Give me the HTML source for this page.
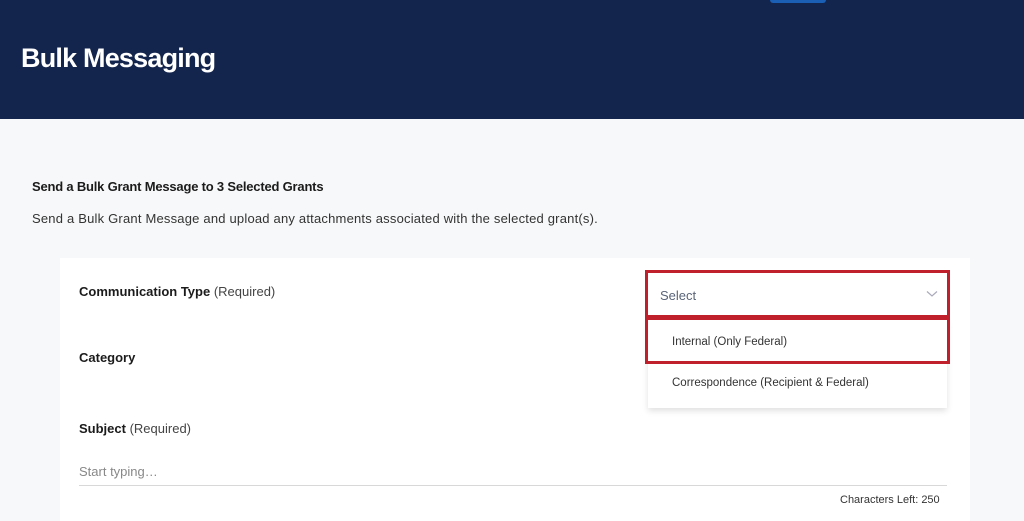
<!DOCTYPE html>
<html><head><style>
*{margin:0;padding:0;box-sizing:border-box}
body{width:1024px;height:521px;overflow:hidden;background:#f7f8f9;font-family:"Liberation Sans",sans-serif;position:relative;color:#1b1b1b}
.hdr{position:absolute;left:0;top:0;width:1024px;height:119px;background:#13244d}
.hdr h1{position:absolute;left:21px;top:43px;color:#fff;font-size:27px;font-weight:bold;letter-spacing:-0.8px}
.pill{position:absolute;left:770px;top:0;width:56px;height:3px;background:#1a5fb4;border-radius:0 0 4px 4px}
.card{position:absolute;left:60px;top:258px;width:910px;height:263px;background:#fff}
.t{position:absolute;font-size:13px;white-space:nowrap}
b{font-weight:bold}
.req{color:#444}
.sel{position:absolute;left:645px;top:270px;width:305px;height:48px;border:3px solid #c0202b;background:#fff}
.dd{position:absolute;left:648px;top:318px;width:299px;height:90px;background:#fff;box-shadow:0 3px 6px rgba(0,0,0,0.12)}
.opt1{position:absolute;left:645px;top:317px;width:305px;height:47px;border:3px solid #c0202b}
</style></head><body>
<div class="hdr"><h1>Bulk Messaging</h1><div class="pill"></div></div>
<div class="t" style="left:32px;top:179px;letter-spacing:-0.2px"><b>Send a Bulk Grant Message to 3 Selected Grants</b></div>
<div class="t" style="left:32px;top:211px;color:#333;letter-spacing:0.2px">Send a Bulk Grant Message and upload any attachments associated with the selected grant(s).</div>
<div class="card"></div>
<div class="t" style="left:79px;top:284px"><b>Communication Type</b> <span class="req">(Required)</span></div>
<div class="t" style="left:79px;top:350px"><b>Category</b></div>
<div class="t" style="left:79px;top:421px"><b>Subject</b> <span class="req">(Required)</span></div>
<div class="t" style="left:79px;top:464px;color:#888">Start typing…</div>
<div style="position:absolute;left:79px;top:485px;width:868px;height:1px;background:#d8d8d8"></div>
<div class="t" style="left:840px;top:494px;font-size:11px;color:#333">Characters Left: 250</div>
<div class="sel"><span class="t" style="left:12px;top:15px;color:#5a6478">Select</span>
<svg style="position:absolute;right:9px;top:17px" width="12" height="8" viewBox="0 0 12 8"><path d="M1 1.5L6 6L11 1.5" fill="none" stroke="#aab" stroke-width="1.2"/></svg></div>
<div class="dd">
<div class="t" style="left:24px;top:59px;font-size:11.5px;color:#333">Correspondence (Recipient &amp; Federal)</div>
</div>
<div class="opt1"><div class="t" style="left:24px;top:16px;font-size:11.5px;color:#333">Internal (Only Federal)</div></div>
</body></html>
